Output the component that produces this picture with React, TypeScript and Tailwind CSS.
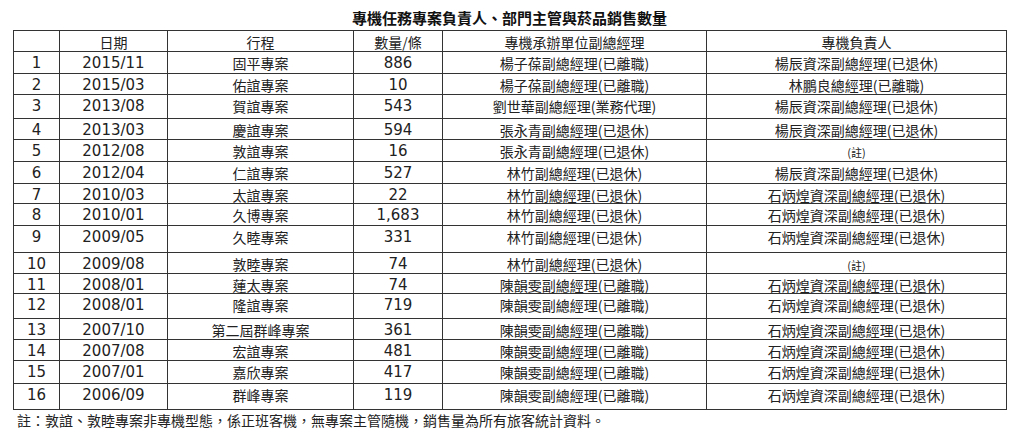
const rows = [
  { no: 1, date: '2015/11', trip: '固平專案', qty: '886', unit: '楊子葆副總經理(已離職)', owner: '楊辰資深副總經理(已退休)', h: 'h-[22px]' },
  { no: 2, date: '2015/03', trip: '佑誼專案', qty: '10', unit: '楊子葆副總經理(已離職)', owner: '林鵬良總經理(已離職)', h: 'h-[21px]' },
  { no: 3, date: '2013/08', trip: '賀誼專案', qty: '543', unit: '劉世華副總經理(業務代理)', owner: '楊辰資深副總經理(已退休)', h: 'h-[24px]' },
  { no: 4, date: '2013/03', trip: '慶誼專案', qty: '594', unit: '張永青副總經理(已退休)', owner: '楊辰資深副總經理(已退休)', h: 'h-[21px]' },
  { no: 5, date: '2012/08', trip: '敦誼專案', qty: '16', unit: '張永青副總經理(已退休)', owner: null, h: 'h-[22px]' },
  { no: 6, date: '2012/04', trip: '仁誼專案', qty: '527', unit: '林竹副總經理(已退休)', owner: '楊辰資深副總經理(已退休)', h: 'h-[22px]' },
  { no: 7, date: '2010/03', trip: '太誼專案', qty: '22', unit: '林竹副總經理(已退休)', owner: '石炳煌資深副總經理(已退休)', h: 'h-[20px]' },
  { no: 8, date: '2010/01', trip: '久博專案', qty: '1,683', unit: '林竹副總經理(已退休)', owner: '石炳煌資深副總經理(已退休)', h: 'h-[22px]' },
  { no: 9, date: '2009/05', trip: '久睦專案', qty: '331', unit: '林竹副總經理(已退休)', owner: '石炳煌資深副總經理(已退休)', h: 'h-[27px]' },
  { no: 10, date: '2009/08', trip: '敦睦專案', qty: '74', unit: '林竹副總經理(已退休)', owner: null, h: 'h-[21px]' },
  { no: 11, date: '2008/01', trip: '蓮太專案', qty: '74', unit: '陳韻雯副總經理(已離職)', owner: '石炳煌資深副總經理(已退休)', h: 'h-[20px]' },
  { no: 12, date: '2008/01', trip: '隆誼專案', qty: '719', unit: '陳韻雯副總經理(已離職)', owner: '石炳煌資深副總經理(已退休)', h: 'h-[25px]' },
  { no: 13, date: '2007/10', trip: '第二屆群峰專案', qty: '361', unit: '陳韻雯副總經理(已離職)', owner: '石炳煌資深副總經理(已退休)', h: 'h-[21px]' },
  { no: 14, date: '2007/08', trip: '宏誼專案', qty: '481', unit: '陳韻雯副總經理(已離職)', owner: '石炳煌資深副總經理(已退休)', h: 'h-[21px]' },
  { no: 15, date: '2007/01', trip: '嘉欣專案', qty: '417', unit: '陳韻雯副總經理(已離職)', owner: '石炳煌資深副總經理(已退休)', h: 'h-[23px]' },
  { no: 16, date: '2006/09', trip: '群峰專案', qty: '119', unit: '陳韻雯副總經理(已離職)', owner: '石炳煌資深副總經理(已退休)', h: 'h-[26px]' },
]

const cell = 'border border-[#333] p-0 pt-[3px] align-top text-center leading-[16px]'
const num = "font-['DejaVu_Sans','Noto_Sans_CJK_TC',sans-serif] text-[15px]"
const cjk = "font-['Noto_Sans_CJK_TC',sans-serif] text-[14px]"

export default function App() {
  return (
    <div className="w-[1024px] h-[438px] bg-white text-[#222] overflow-hidden">
      <div className="pl-[13px]">
        {/* Title */}
        <div className="w-[993px] h-[30px] pt-[8px] text-center font-['Noto_Sans_CJK_TC',sans-serif] text-[15px] font-bold leading-[20px] text-[#111]">
          專機任務專案負責人、部門主管與菸品銷售數量
        </div>

        <table className="w-[993px] table-fixed border-collapse">
          <colgroup>
            <col className="w-[46px]" />
            <col className="w-[108px]" />
            <col className="w-[186px]" />
            <col className="w-[89px]" />
            <col className="w-[264px]" />
            <col className="w-[300px]" />
          </colgroup>
          <thead>
            <tr className="h-[21px]">
              <th className={`${cell} ${cjk} font-normal`}></th>
              <th className={`${cell} ${cjk} font-normal`}>日期</th>
              <th className={`${cell} ${cjk} font-normal`}>行程</th>
              <th className={`${cell} ${cjk} font-normal`}>數量/條</th>
              <th className={`${cell} ${cjk} font-normal`}>專機承辦單位副總經理</th>
              <th className={`${cell} ${cjk} font-normal`}>專機負責人</th>
            </tr>
          </thead>
          <tbody>
            {rows.map((r) => (
              <tr key={r.no} className={r.h}>
                <td className={`${cell} ${num}`}>{r.no}</td>
                <td className={`${cell} ${num}`}>{r.date}</td>
                <td className={`${cell} ${cjk}`}>{r.trip}</td>
                <td className={`${cell} ${num}`}>{r.qty}</td>
                <td className={`${cell} ${cjk}`}>{r.unit}</td>
                <td className={`${cell} ${cjk}`}>
                  {r.owner ?? <span className="text-[11px]">(註)</span>}
                </td>
              </tr>
            ))}
          </tbody>
        </table>

        {/* Footnote */}
        <p className="pl-[4px] font-['Noto_Sans_CJK_TC',sans-serif] text-[14px] leading-[20px]">
          註：敦誼、敦睦專案非專機型態，係正班客機，無專案主管隨機，銷售量為所有旅客統計資料。
        </p>
      </div>
    </div>
  )
}
